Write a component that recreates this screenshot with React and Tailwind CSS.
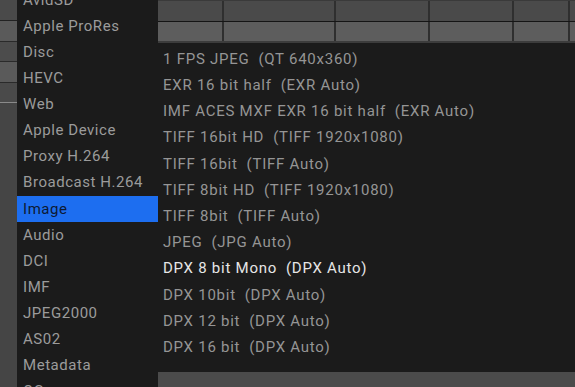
const categories = [
    "AvidSD",
    "Apple ProRes",
    "Disc",
    "HEVC",
    "Web",
    "Apple Device",
    "Proxy H.264",
    "Broadcast H.264",
    "Image",
    "Audio",
    "DCI",
    "IMF",
    "JPEG2000",
    "AS02",
    "Metadata",
    "QC",
];

const presets = [
    "1 FPS JPEG  (QT 640x360)",
    "EXR 16 bit half  (EXR Auto)",
    "IMF ACES MXF EXR 16 bit half  (EXR Auto)",
    "TIFF 16bit HD  (TIFF 1920x1080)",
    "TIFF 16bit  (TIFF Auto)",
    "TIFF 8bit HD  (TIFF 1920x1080)",
    "TIFF 8bit  (TIFF Auto)",
    "JPEG  (JPG Auto)",
    "DPX 8 bit Mono  (DPX Auto)",
    "DPX 10bit  (DPX Auto)",
    "DPX 12 bit  (DPX Auto)",
    "DPX 16 bit  (DPX Auto)",
];

const GridRow = ({ tone }) => (
    <div className={`flex ${tone}`}>
        <div className="w-[66px] border-r-2 border-[#2f2f2f]" />
        <div className="w-[112px] border-r-2 border-[#2f2f2f]" />
        <div className="w-[94px] border-r-2 border-[#2f2f2f]" />
        <div className="w-[84px] border-r-2 border-[#2f2f2f]" />
        <div className="w-[56px] border-r-2 border-[#2f2f2f]" />
        <div className="flex-1" />
    </div>
);

const App = () => {
    const selected = "Image";
    const hovered = "DPX 8 bit Mono  (DPX Auto)";

    return (
        <div
            className="flex w-[575px] h-[387px] overflow-hidden bg-[#464646] text-[15px] tracking-[0.55px]"
            style={{ fontFamily: "Roboto, 'Liberation Sans', sans-serif" }}
        >
            {/* background clip strip */}
            <div className="w-[17px] flex flex-col bg-[#454545]">
                <div className="h-[21px] bg-[#4a4a4a] border-b border-[#222]" />
                <div className="h-[21px] bg-[#5a5a5a] border-b border-[#2a2a2a]" />
                <div className="h-[20px] bg-[#4c4c4c] border-b border-[#2a2a2a]" />
                <div className="h-[21px] bg-[#5a5a5a] border-b border-[#2a2a2a]" />
                <div className="h-[20px] bg-[#4a4a4a] border-b border-[#8a8a8a]" />
            </div>

            {/* category menu */}
            <div className="w-[141px] bg-[#1b1b1b] flex flex-col -mt-[13px]">
                {categories.map((c) => (
                    <div
                        key={c}
                        className={`h-[26.1px] shrink-0 flex items-center pl-[6px] whitespace-nowrap ${c === selected ? "bg-[#1d6ef0] text-[#0d1a33]" : "text-[#9b9b9b]"}`}
                    >
                        {c}
                    </div>
                ))}
            </div>

            {/* timeline area with preset submenu */}
            <div className="flex-1 flex flex-col">
                <GridRow tone="h-[21px] bg-[#4a4a4a] border-t border-[#3a3a3a]" />
                <div className="h-px bg-[#151515]" />
                <GridRow tone="h-[19px] bg-[#5d5d5d]" />
                <div className="h-[2px] bg-[#3c3c3c]" />
                <div className="h-[329px] bg-[#1b1b1b] pt-[3px] pl-[5px] tracking-[0.75px]">
                    {presets.map((p) => (
                        <div
                            key={p}
                            className={`h-[26.2px] flex items-center whitespace-pre ${p === hovered ? "text-[#e6e6e6]" : "text-[#959595]"}`}
                        >
                            {p}
                        </div>
                    ))}
                </div>
                <div className="flex-1 bg-[#4b4b4b]" />
            </div>
        </div>
    );
};

export default App;
